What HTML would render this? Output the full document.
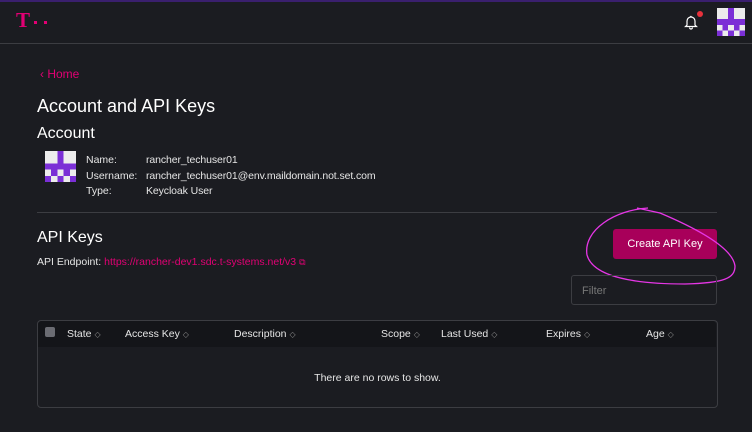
<!DOCTYPE html>
<html><head><style>
body{margin:0;width:752px;height:432px;background:#1b1c21;font-family:"Liberation Sans",sans-serif;color:#fff;position:relative;overflow:hidden}
.a{position:absolute}
.top{left:0;top:0;width:752px;height:2px;background:#3a1f6e}
.hdr{left:0;top:43px;width:752px;height:1px;background:#3c3d42}
.mg{color:#e20074}
.th{font-size:10.5px;color:#e6e6e6;top:328px}
.car{font-size:8px;color:#888}
</style></head><body>
<div class="a top"></div>
<div class="a mg" style="left:16px;top:9px;font-size:21px;font-family:'Liberation Serif',serif;font-weight:bold;line-height:22px">T</div>
<div class="a" style="left:34px;top:21px;width:3px;height:3px;background:#e20074"></div>
<div class="a" style="left:44px;top:21px;width:3px;height:3px;background:#e20074"></div>
<svg class="a" style="left:683px;top:14px" width="16" height="16" viewBox="0 0 16 16"><path d="M4 11V7a4 4 0 0 1 8 0v4l1.5 1.5h-11z M6.5 13.5a1.5 1.5 0 0 0 3 0" fill="none" stroke="#fff" stroke-width="1.2"/><circle cx="7.9" cy="2.5" r="0.8" fill="#fff"/></svg>
<div class="a" style="left:697px;top:11px;width:6px;height:6px;border-radius:50%;background:#e8313c"></div>
<svg class="a" style="left:717px;top:8px" width="28" height="28" viewBox="0 0 5 5" shape-rendering="crispEdges"><rect width="5" height="5" fill="#ececec"/><rect x="2" y="0" width="1" height="3" fill="#7b2fd6"/><rect x="0" y="2" width="5" height="1" fill="#7b2fd6"/><rect x="1" y="3" width="1" height="1" fill="#7b2fd6"/><rect x="3" y="3" width="1" height="1" fill="#7b2fd6"/><rect x="0" y="4" width="1" height="1" fill="#7b2fd6"/><rect x="2" y="4" width="1" height="1" fill="#7b2fd6"/><rect x="4" y="4" width="1" height="1" fill="#7b2fd6"/></svg>
<div class="a hdr"></div>
<div class="a mg" style="left:40px;top:67px;font-size:12px">‹ Home</div>
<div class="a" style="left:37px;top:96px;font-size:18px">Account and API Keys</div>
<div class="a" style="left:37px;top:125px;font-size:16px">Account</div>
<svg class="a" style="left:45px;top:151px" width="31" height="31" viewBox="0 0 5 5" shape-rendering="crispEdges"><rect width="5" height="5" fill="#ececec"/><rect x="2" y="0" width="1" height="3" fill="#7b2fd6"/><rect x="0" y="2" width="5" height="1" fill="#7b2fd6"/><rect x="1" y="3" width="1" height="1" fill="#7b2fd6"/><rect x="3" y="3" width="1" height="1" fill="#7b2fd6"/><rect x="0" y="4" width="1" height="1" fill="#7b2fd6"/><rect x="2" y="4" width="1" height="1" fill="#7b2fd6"/><rect x="4" y="4" width="1" height="1" fill="#7b2fd6"/></svg>
<div class="a" style="left:86px;top:153px;font-size:10.5px;line-height:15.5px;color:#e6e6e6">Name:<br>Username:<br>Type:</div>
<div class="a" style="left:146px;top:153px;font-size:10.5px;line-height:15.5px;color:#e6e6e6;letter-spacing:-0.1px">rancher_techuser01<br>rancher_techuser01@env.maildomain.not.set.com<br>Keycloak User</div>
<div class="a" style="left:37px;top:212px;width:680px;height:1px;background:#3c3d42"></div>
<div class="a" style="left:37px;top:229px;font-size:16px">API Keys</div>
<div class="a" style="left:37px;top:256px;font-size:10.5px;color:#e6e6e6">API Endpoint: <span class="mg">https://rancher-dev1.sdc.t-systems.net/v3</span> <span class="mg" style="font-size:9px">⧉</span></div>
<div class="a" style="left:613px;top:229px;width:104px;height:30px;background:#a8005a;border-radius:3px;font-size:11px;text-align:center;line-height:31px">Create API Key</div>
<svg class="a" style="left:575px;top:200px" width="170" height="95"><path d="M73 8 C40 10,8 30,12 55 C18 77,60 84,110 84 C150 83,160 78,160 66 C158 50,130 32,85 13 L62 8" fill="none" stroke="#e636e6" stroke-width="1.3"/></svg>
<div class="a" style="left:571px;top:275px;font-size:11px;color:#777;line-height:30px;padding-left:10px;box-sizing:border-box;width:146px;height:30px;border:1px solid #3c3d42;border-radius:3px">Filter</div>
<div class="a" style="left:37px;top:320px;width:679px;height:86px;border:1px solid #3c3d42;border-radius:4px"></div>
<div class="a" style="left:38px;top:321px;width:678px;height:26px;background:#141519;border-radius:4px 4px 0 0"></div>
<div class="a" style="left:45px;top:327px;width:10px;height:10px;background:#6b6c73;border-radius:2px"></div>
<div class="a th" style="left:67px">State <span class="car">◇</span></div>
<div class="a th" style="left:125px">Access Key <span class="car">◇</span></div>
<div class="a th" style="left:234px">Description <span class="car">◇</span></div>
<div class="a th" style="left:381px">Scope <span class="car">◇</span></div>
<div class="a th" style="left:441px">Last Used <span class="car">◇</span></div>
<div class="a th" style="left:546px">Expires <span class="car">◇</span></div>
<div class="a th" style="left:646px">Age <span class="car">◇</span></div>
<div class="a" style="left:37px;width:681px;top:372px;text-align:center;font-size:10.5px;color:#e6e6e6">There are no rows to show.</div>
</body></html>
